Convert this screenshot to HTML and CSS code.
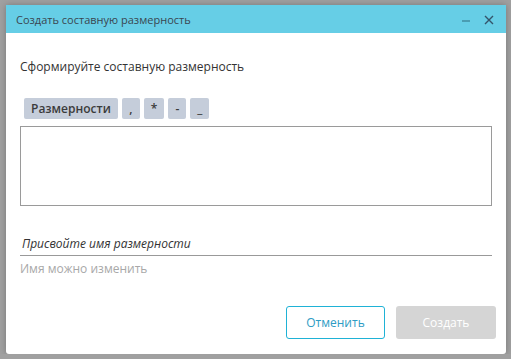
FILE: index.html
```html
<!DOCTYPE html>
<html lang="ru">
<head>
  <meta charset="UTF-8">
  <title>Создать составную размерность</title>
  <link rel="stylesheet" href="styles.css">
</head>
<body>
  <div class="dialog">
    <div class="dialog-header">
      <span class="dialog-title">Создать составную размерность</span>
      <div class="header-tools">
        <svg class="tool-min" width="9" height="10" viewBox="0 0 9 10"><path d="M0 7h8" stroke="#4a9db2" stroke-width="2"/></svg>
        <svg class="tool-close" width="10" height="10" viewBox="0 0 10 10"><path d="M1 1l8 8M9 1l-8 8" stroke="#34546a" stroke-width="1.4"/></svg>
      </div>
    </div>

    <div class="dialog-body">
      <p class="prompt">Сформируйте составную размерность</p>

      <div class="chips">
        <span class="chip">Размерности</span>
        <span class="chip chip-sym">,</span>
        <span class="chip chip-sym">*</span>
        <span class="chip chip-sym">-</span>
        <span class="chip chip-sym">_</span>
      </div>

      <div class="formula-box"></div>

      <div class="name-field">
        <input type="text" class="name-input" placeholder="Присвойте имя размерности">
      </div>
      <div class="hint">Имя можно изменить</div>
    </div>

    <div class="dialog-footer">
      <button class="btn btn-cancel">Отменить</button>
      <button class="btn btn-create" disabled>Создать</button>
    </div>
  </div>
</body>
</html>
```

FILE: styles.css
```css
  body {
    margin: 0;
    background-color: #a0a0a0;
    font-family: 'Open Sans', sans-serif;
    color: #333;
  }

  .dialog {
    margin: 5px 0 0 6px;
    width: 500px;
    height: 349px;
    background: #ffffff;
    border-radius: 0 0 3px 3px;
    box-shadow: 0 0 6px rgba(0, 0, 0, 0.25);
    display: flex;
    flex-direction: column;
  }

  .dialog-header {
    height: 28px;
    background-color: #66cee6;
    display: flex;
    align-items: center;
    padding: 0 12px 0 10px;
  }

  .dialog-title {
    font-size: 11px;
    color: #3a4650;
    flex: 1;
  }

  .header-tools {
    display: flex;
    gap: 13px;
    align-items: center;
  }

  .tool-close {
    margin-top: 1px;
  }

  .dialog-body {
    padding: 25px 14px 0 14px;
  }

  .prompt {
    margin: 0;
    font-size: 12px;
    line-height: 18px;
    color: #333;
  }

  .chips {
    display: flex;
    gap: 4px;
    margin: 22px 0 0 4px;
  }

  .chip {
    height: 21px;
    line-height: 21px;
    padding: 0 7px;
    background-color: #c5cdda;
    border-radius: 2px;
    font-size: 12px;
    font-weight: 600;
    color: #3b3b3b;
  }

  .chip-sym {
    min-width: 4px;
    text-align: center;
  }

  .formula-box {
    margin-top: 7px;
    height: 78px;
    border: 1px solid #9a9a9a;
  }

  .name-field {
    margin-top: 25px;
  }

  .name-input {
    width: 100%;
    box-sizing: border-box;
    height: 24px;
    padding: 0 2px;
    border: none;
    border-bottom: 1px solid #999;
    font-family: 'Open Sans', sans-serif;
    font-size: 12px;
    font-style: italic;
    outline: none;
  }

  .name-input::placeholder {
    color: #333;
  }

  .hint {
    margin-top: 5px;
    font-size: 12px;
    line-height: 16px;
    color: #a8a8a8;
  }

  .dialog-footer {
    margin-top: auto;
    display: flex;
    justify-content: flex-end;
    gap: 11px;
    padding: 0 10px 15px 0;
  }

  .btn {
    width: 100px;
    height: 33px;
    border-radius: 3px;
    font-family: 'Open Sans', sans-serif;
    font-size: 12px;
    cursor: pointer;
  }

  .btn-cancel {
    width: 99px;
    background: #fff;
    border: 1px solid #1fb2d6;
    color: #2e9cc4;
  }

  .btn-create {
    background-color: #d5d5d5;
    border: none;
    color: #fff;
  }
```
